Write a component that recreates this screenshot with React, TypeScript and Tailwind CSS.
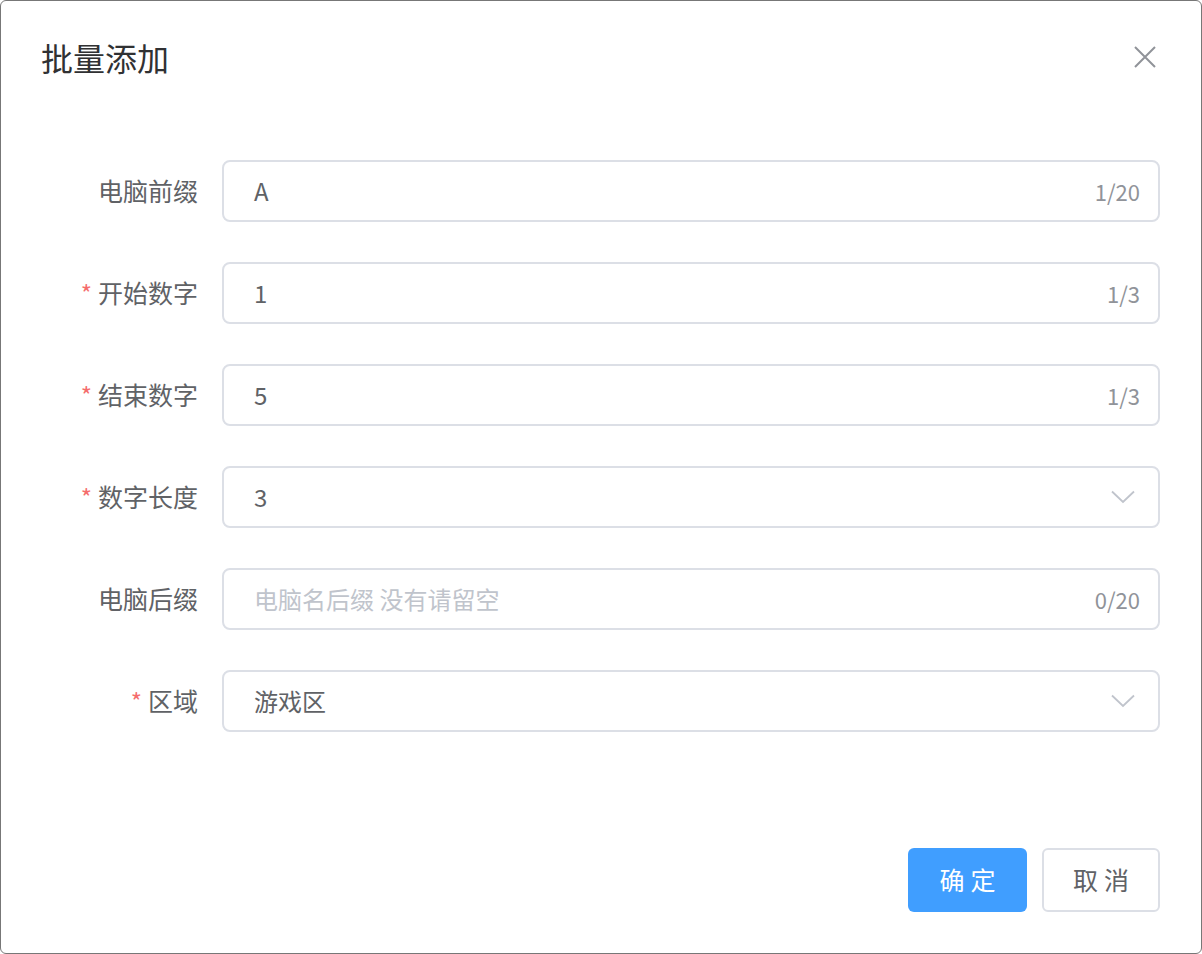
import React from "react";

const font = { fontFamily: '"Noto Sans CJK SC", "Noto Sans", sans-serif' };

function Chevron() {
  return (
    <svg width="24" height="14" viewBox="0 0 24 14" fill="none" stroke="#c0c4cc" strokeWidth="1.8">
      <path d="M1 1.5 L12 12 L23 1.5" />
    </svg>
  );
}

function Row({ label, req, value, placeholder, count, select }: { label: string; req?: boolean; value?: string; placeholder?: string; count?: string; select?: boolean }) {
  return (
    <div className="flex items-center h-[62px]">
      <div className="w-[221px] pr-[24px] flex justify-end items-center text-[25px] text-[#606266]">
        {req && <span className="text-[#f56c6c] mr-[6px] text-[24px]">*</span>}
        {label}
      </div>
      <div className="flex-1 h-[62px] border-2 border-[#dcdfe6] rounded-[8px] flex items-center pl-[30px] pr-[18px]">
        <span className={`flex-1 text-[24px] ${value ? "text-[#606266]" : "text-[#c0c4cc]"}`}>{value || placeholder}</span>
        {count && <span className="text-[22px] text-[#909399]">{count}</span>}
        {select && <span className="mr-[5px]"><Chevron /></span>}
      </div>
    </div>
  );
}

export default function App() {
  return (
    <div style={font} className="w-[1202px] h-[954px] bg-white border border-[#777] rounded-[6px] flex flex-col overflow-hidden">
      <div className="flex items-center justify-between pl-[40px] pr-[44px] h-[112px]">
        <span className="text-[32px] text-[#303133]">批量添加</span>
        <svg width="24" height="24" viewBox="0 0 24 24" stroke="#909399" strokeWidth="2">
          <path d="M2 2 L22 22 M22 2 L2 22" />
        </svg>
      </div>
      <div className="flex flex-col gap-[40px] pt-[47px] pr-[41px]">
        <Row label="电脑前缀" value="A" count="1/20" />
        <Row label="开始数字" req value="1" count="1/3" />
        <Row label="结束数字" req value="5" count="1/3" />
        <Row label="数字长度" req value="3" select />
        <Row label="电脑后缀" placeholder="电脑名后缀 没有请留空" count="0/20" />
        <Row label="区域" req value="游戏区" select />
      </div>
      <div className="flex justify-end gap-[15px] pr-[41px] mt-[116px]">
        <button className="w-[119px] h-[64px] rounded-[6px] bg-[#409eff] text-white text-[25px] tracking-[6px] pl-[6px]">确定</button>
        <button className="w-[118px] h-[64px] rounded-[6px] border-2 border-[#dcdfe6] text-[#606266] text-[25px] tracking-[6px] pl-[6px]">取消</button>
      </div>
    </div>
  );
}
